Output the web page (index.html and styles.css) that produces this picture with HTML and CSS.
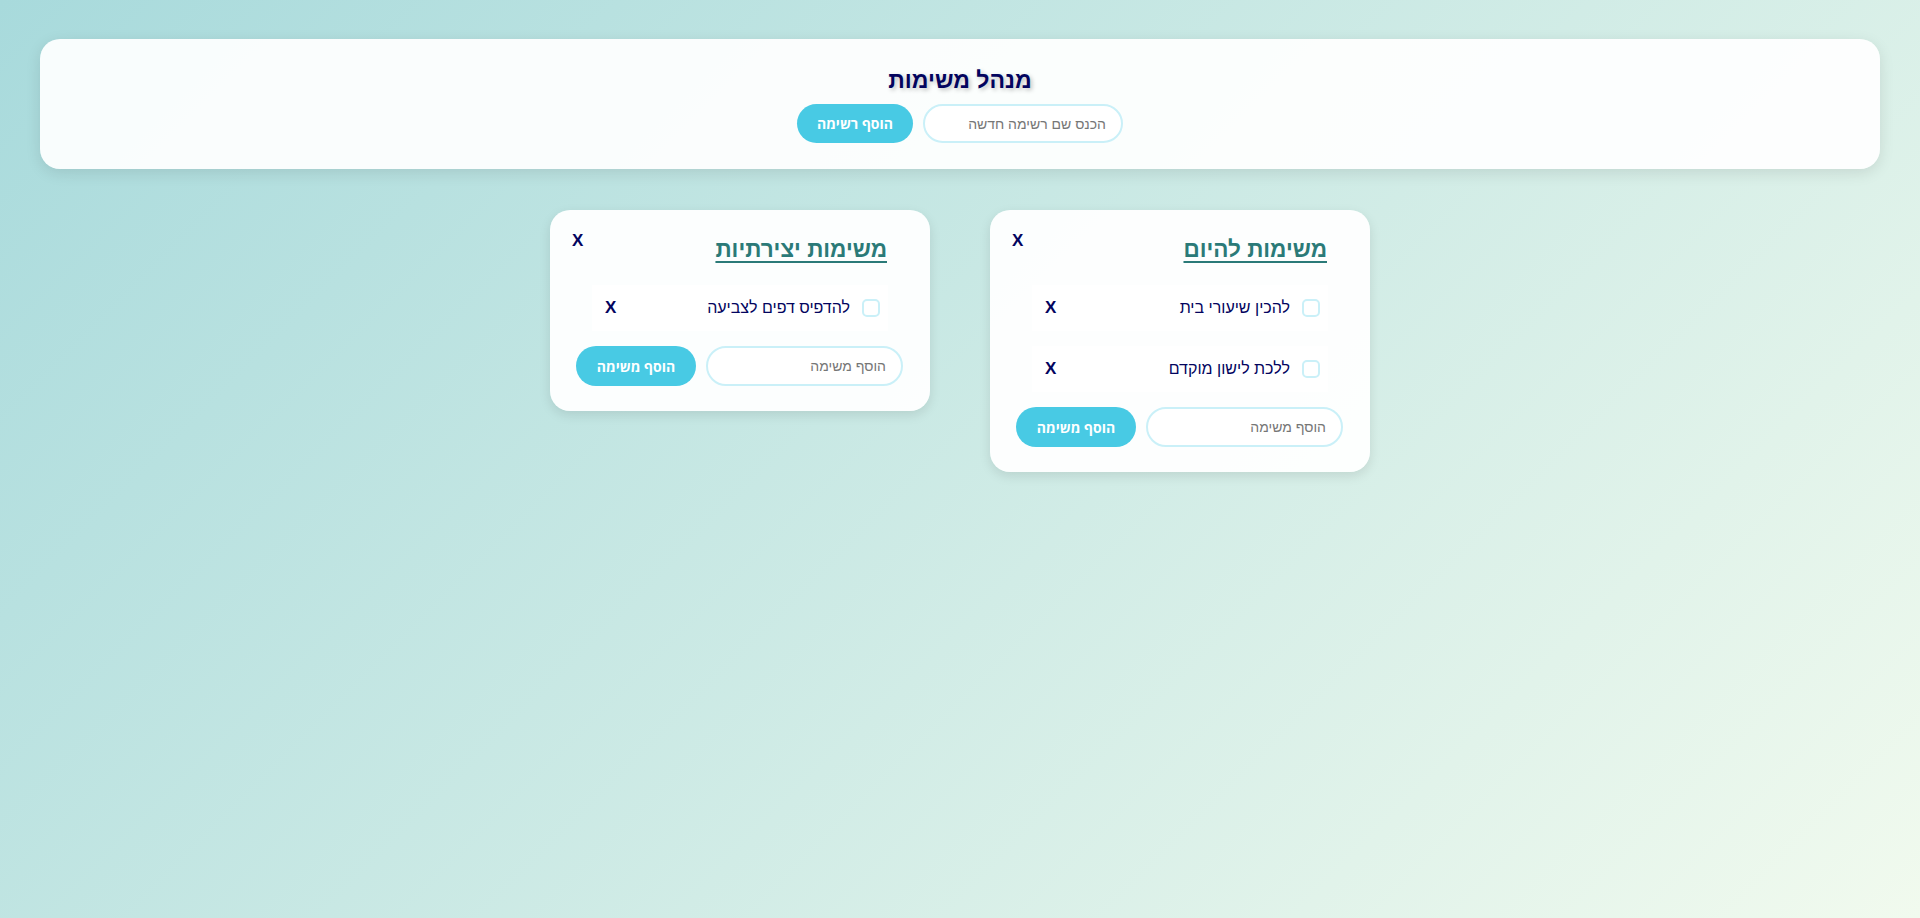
FILE: index.html
```html
<!DOCTYPE html>
<html lang="he" dir="rtl">
<head>
<meta charset="utf-8">
<title>מנהל משימות</title>
<link rel="stylesheet" href="styles.css">
</head>
<body>
  <header class="top">
    <h1 class="app-title">מנהל משימות</h1>
    <div class="add-row">
      <input class="text-input" type="text" placeholder="הכנס שם רשימה חדשה">
      <button class="btn">הוסף רשימה</button>
    </div>
  </header>

  <main class="lists">
    <section class="card">
      <div class="card-head">
        <h2 class="card-title">משימות להיום</h2>
        <button class="del">X</button>
      </div>
      <ul class="tasks">
        <li class="task">
          <span class="check"></span>
          <span class="task-text">להכין שיעורי בית</span>
          <button class="del">X</button>
        </li>
        <li class="task">
          <span class="check"></span>
          <span class="task-text">ללכת לישון מוקדם</span>
          <button class="del">X</button>
        </li>
      </ul>
      <div class="add-row card-add">
        <input class="text-input" type="text" placeholder="הוסף משימה">
        <button class="btn">הוסף משימה</button>
      </div>
    </section>

    <section class="card">
      <div class="card-head">
        <h2 class="card-title">משימות יצירתיות</h2>
        <button class="del">X</button>
      </div>
      <ul class="tasks">
        <li class="task">
          <span class="check"></span>
          <span class="task-text">להדפיס דפים לצביעה</span>
          <button class="del">X</button>
        </li>
      </ul>
      <div class="add-row card-add">
        <input class="text-input" type="text" placeholder="הוסף משימה">
        <button class="btn">הוסף משימה</button>
      </div>
    </section>
  </main>
</body>
</html>
```

FILE: styles.css
```css
html {
  min-height: 100%;
  background: linear-gradient(135deg, #a8dadc 0%, #f1faee 100%);
}

body {
  margin: 0;
  min-height: 918px;
  box-sizing: border-box;
  padding: 39px 40px;
  font-family: "Liberation Sans", Arial, sans-serif;
  color: #03045e;
}

.top {
  background: rgba(255, 255, 255, 0.93);
  border-radius: 20px;
  box-shadow: 0 4px 15px rgba(0, 0, 0, 0.1);
  padding: 26px 20px 26px;
  display: flex;
  flex-direction: column;
  align-items: center;
}

.app-title {
  margin: 0 0 9px;
  font-size: 23px;
  line-height: 30px;
  font-weight: bold;
  color: #03045e;
  text-shadow: 2px 2px 4px rgba(0, 0, 0, 0.25);
}

.add-row {
  display: flex;
  gap: 10px;
  align-items: center;
}

.text-input {
  box-sizing: border-box;
  width: 200px;
  height: 39px;
  padding: 0 15px;
  border: 2px solid #caf0f8;
  border-radius: 20px;
  background: #fff;
  font-family: "Liberation Sans", Arial, sans-serif;
  font-size: 14px;
  color: #03045e;
  outline: none;
}

.text-input::placeholder {
  color: #767676;
}

.btn {
  box-sizing: border-box;
  height: 39px;
  width: 116px;
  padding: 0;
  border: none;
  border-radius: 20px;
  background: #48cae4;
  color: #fff;
  font-family: "Open Sans", "Liberation Sans", sans-serif;
  font-weight: bold;
  font-size: 14px;
  cursor: pointer;
}

.lists {
  margin-top: 41px;
  display: flex;
  justify-content: center;
  align-items: flex-start;
  gap: 60px;
}

.card {
  box-sizing: border-box;
  width: 380px;
  background: rgba(255, 255, 255, 0.95);
  border-radius: 20px;
  box-shadow: 0 4px 12px rgba(0, 0, 0, 0.1);
  padding: 22px 27px 25px 26px;
}

.card-head {
  display: flex;
  justify-content: space-between;
  align-items: flex-start;
  padding-right: 16px;
  margin-left: -4px;
  margin-bottom: 20px;
}

.card-title {
  margin: 3px 0 0;
  font-size: 22.5px;
  line-height: 30px;
  font-weight: bold;
  color: #2b7a78;
  text-decoration: underline;
  text-underline-offset: 4px;
}

.del {
  background: none;
  border: none;
  padding: 0;
  font-family: "Liberation Sans", Arial, sans-serif;
  font-weight: bold;
  font-size: 17px;
  line-height: 18px;
  color: #03045e;
  cursor: pointer;
}

.tasks {
  list-style: none;
  margin: 0 15px 0 16px;
  padding: 0;
}

.task {
  display: flex;
  align-items: center;
  background: #fff;
  padding: 12px 8px 12px 13px;
  margin-bottom: 15px;
  line-height: 22px;
}

.check {
  box-sizing: border-box;
  width: 18px;
  height: 18px;
  border: 2px solid #caf0f8;
  border-radius: 5px;
  margin-left: 12px;
  flex: none;
}

.task-text {
  flex: 1;
  font-size: 16px;
  color: #03045e;
}

.card-add {
  justify-content: space-between;
}

.card-add .text-input {
  width: 197px;
  height: 40px;
}

.card-add .btn {
  width: 120px;
  height: 40px;
}
```
